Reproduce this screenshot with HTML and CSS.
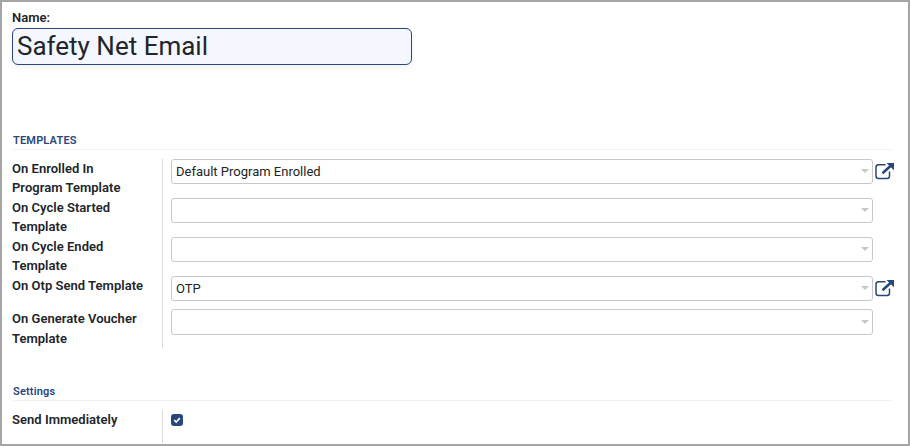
FILE: index.html
```html
<!DOCTYPE html>
<html lang="en">
<head>
<meta charset="utf-8">
<title>Safety Net Email</title>
<link rel="stylesheet" href="styles.css">
</head>
<body>
<svg class="symbols" aria-hidden="true">
  <symbol id="external" viewBox="0 0 20 18">
    <path d="M10.500 2.700H3.500Q1 2.700 1 5.200V14Q1 16.500 3.500 16.500H12Q14.500 16.500 14.500 14V9.500" fill="none" stroke="currentColor" stroke-width="1.500"/>
    <path d="M7.500 11.200L16 3.500" fill="none" stroke="currentColor" stroke-width="2.600"/>
    <path d="M11.500 1H19V8.200Z" fill="currentColor"/>
  </symbol>
</svg>
<main class="sheet">
  <label class="name-label" for="name">Name:</label>
  <div class="name-field" id="name">Safety Net Email</div>

  <section class="group templates">
    <h2 class="group-title">TEMPLATES</h2>
    <div class="rows">
      <div class="row"><div class="label">On Enrolled In Program Template</div><div class="cell"><div class="select">Default Program Enrolled</div><svg class="external"><use href="#external"/></svg></div></div>
      <div class="row"><div class="label">On Cycle Started Template</div><div class="cell"><div class="select"></div></div></div>
      <div class="row"><div class="label">On Cycle Ended Template</div><div class="cell"><div class="select"></div></div></div>
      <div class="row short"><div class="label">On Otp Send Template</div><div class="cell"><div class="select">OTP</div><svg class="external"><use href="#external"/></svg></div></div>
      <div class="row last"><div class="label">On Generate Voucher Template</div><div class="cell"><div class="select"></div></div></div>
    </div>
  </section>

  <section class="group settings">
    <h2 class="group-title">Settings</h2>
    <div class="rows">
      <div class="row single"><div class="label">Send Immediately</div><div class="cell"><span class="check"><svg viewBox="0 0 12 12"><path d="M3.300 6.200L5.200 8L8.800 4.200" fill="none" stroke="#fff" stroke-width="1.700"/></svg></span></div></div>
    </div>
  </section>
</main>
</body>
</html>
```
FILE: styles.css
```css
* { box-sizing: border-box; }
body {
  margin: 0;
  font: 13px/19.5px Roboto, sans-serif;
  color: #212529;
  background: #fff;
}
.symbols { display: none; }
.sheet {
  height: 446px;
  overflow: hidden;
  border: 2px solid #a5a5a5;
  padding: 6px 16px 0 10px;
}
.name-label { display: block; font-weight: 600; }
.name-field {
  width: 400px;
  height: 37px;
  padding: 0 4px;
  border: 1px solid #28477d;
  border-radius: 6px;
  background: #f4f7ff;
  box-shadow: 0 3px 6px rgba(0, 0, 0, .06);
  font-size: 26px;
  line-height: 34px;
}
.group-title {
  margin: 0 0 0 1px;
  height: 19px;
  border-bottom: 1px solid #f0f0f0;
  color: #28477d;
  font-size: 11px;
  line-height: 20px;
  font-weight: 600;
  letter-spacing: .18px;
}
.templates { margin-top: 66px; }
.settings { margin-top: 34px; }
.rows { margin-top: 9px; }
.row { display: flex; height: 39px; }
.row.short { height: 33px; }
.row.single { height: 33px; }
.label {
  flex: none;
  width: 151px;
  padding-right: 18px;
  border-right: 1px solid #dadada;
  font-weight: 600;
  letter-spacing: .03px;
}
.last .label { line-height: 20px; }
.cell { display: flex; flex: none; padding-left: 8px; }
.select {
  display: flex;
  flex: none;
  align-items: center;
  justify-content: space-between;
  width: 702px;
  height: 25px;
  padding: 0 3px 0 4px;
  border: 1px solid #c8c8c8;
  border-radius: 3px;
  line-height: 21px;
}
.last .select { height: 26px; }
.select::after {
  content: "";
  margin-left: auto;
  border: 4px solid transparent;
  border-top-color: #c8c8c8;
  border-bottom: 0;
}
.external { flex: none; width: 20px; height: 18px; margin: 3px 0 0 2px; color: #28477d; }
.check {
  width: 12px;
  height: 12px;
  margin-top: 4px;
  border-radius: 3px;
  background: #28477d;
}
.check svg { display: block; }
```
